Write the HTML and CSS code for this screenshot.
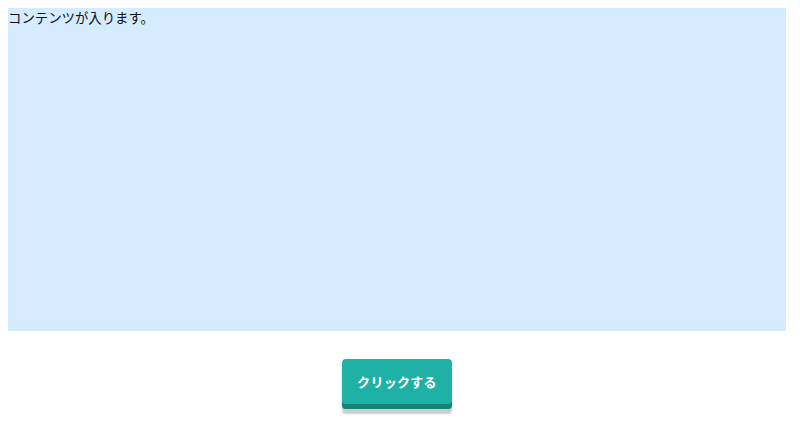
FILE: index.html
```html
<!DOCTYPE html>
<html lang="ja">
<head>
<meta charset="utf-8">
<link rel="stylesheet" href="styles.css">
</head>
<body>
<div class="page">
  <div class="content">コンテンツが入ります。</div>
  <div class="actions">
    <button class="btn">クリックする</button>
  </div>
</div>
</body>
</html>
```
FILE: styles.css
```css
html, body {
  margin: 0;
  padding: 0;
  background: #ffffff;
}
body {
  padding: 8px;
  font-family: "Noto Sans CJK JP", "Noto Sans", sans-serif;
  color: #111;
}
.page {
  width: 778px;
}
.content {
  height: 323px;
  background: #d5ebff;
  font-size: 13.4px;
  line-height: 18px;
}
.actions {
  display: flex;
  justify-content: center;
  padding-top: 28px;
}
.btn {
  width: 110px;
  height: 50px;
  border: none;
  border-radius: 4px;
  background: #20b1a6;
  color: #ffffff;
  font-family: "Noto Sans CJK JP", sans-serif;
  font-weight: 700;
  font-size: 13px;
  letter-spacing: 0.3px;
  padding: 0 0 5px 0;
  box-shadow: inset 0 -5px 0 #118577, 0 5px 2px rgba(0,0,0,0.2);
  cursor: pointer;
}
```
